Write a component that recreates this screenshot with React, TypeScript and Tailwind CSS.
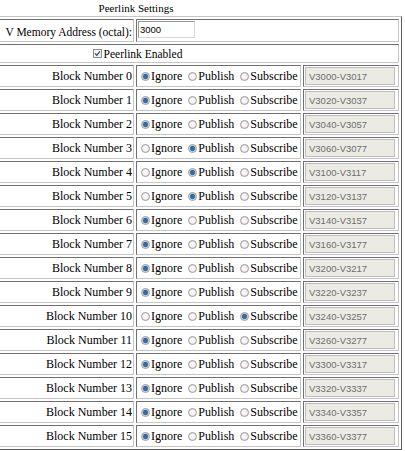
import React from "react";

type Mode = "ignore" | "publish" | "subscribe";

// Blocks 3-5 publish, block 10 subscribes, the rest are ignored
const MODES: Mode[] = Array.from({ length: 16 }, (_, i) =>
  i >= 3 && i <= 5 ? "publish" : i === 10 ? "subscribe" : "ignore"
);

const cell =
  "border border-t-[#707070] border-l-[#707070] border-b-[#c4c4c4] border-r-[#c4c4c4] p-px";

function range(i: number) {
  const start = 0o3000 + i * 16;
  return `V${start.toString(8)}-V${(start + 15).toString(8)}`;
}

function Radio({ on }: { on: boolean }) {
  return (
    <svg width="9" height="9" viewBox="0 0 9 9" className="ml-[3px] mr-px shrink-0">
      <circle cx="4.5" cy="4.5" r="4" fill="#e2e2e2" stroke="#a0a0a0" strokeWidth="1" />
      <circle cx="4.5" cy="4.5" r="2.8" fill="#f4f4f4" />
      {on && <circle cx="4.5" cy="4.5" r="2.4" fill="#2f6eae" stroke="#1f4f80" strokeWidth="0.6" />}
    </svg>
  );
}

function Option({ label, on }: { label: string; on: boolean }) {
  return (
    <span className="flex items-center mr-[3px]">
      <Radio on={on} />
      <span>{label}</span>
    </span>
  );
}

export default function App() {
  return (
    <div className="w-[405px] h-[451px] overflow-hidden bg-white text-black font-['Liberation_Serif',serif] text-[12px]">
      <div className="-ml-[130px] w-[532px]">
        <div className="h-4 text-center text-[11px] leading-4">Peerlink Settings</div>
        <div className="grid grid-cols-[261px_165px_96px] gap-[2px] p-[2px] border border-t-[#c6c6c6] border-l-[#c6c6c6] border-b-[#5c5c5c] border-r-[#5c5c5c]">
          <div className={`${cell} h-[23px] flex items-start justify-end`}>
            <span className="text-[11.5px] leading-[18px] pt-[2px]">V Memory Address (octal):</span>
          </div>
          <div className={`${cell} col-span-2 h-[23px] flex items-start`}>
            <input
              defaultValue="3000"
              className="w-[57px] h-[17px] border border-t-[#9a9a9a] border-l-[#9a9a9a] border-b-[#d6d6d6] border-r-[#d6d6d6] bg-white px-px font-['Liberation_Sans',sans-serif] text-[9.5px] text-black outline-none"
            />
          </div>

          <div className={`${cell} col-span-3 h-[19px] flex items-center justify-center`}>
            <svg width="9" height="9" viewBox="0 0 9 9" className="ml-[3px] mr-[2px]">
              <rect x="0.5" y="0.5" width="8" height="8" fill="#f3f3f3" stroke="#8e8e8e" />
              <path d="M2 4.4 L3.8 6.3 L7 2.4" fill="none" stroke="#3a4e74" strokeWidth="1.3" />
            </svg>
            <span className="text-[11.5px] leading-[14px]">Peerlink Enabled</span>
          </div>

          {MODES.map((mode, i) => (
            <React.Fragment key={i}>
              <div className={`${cell} h-[22px] flex items-center justify-end`}>
                <span className="leading-[18px]">Block Number {i}</span>
              </div>
              <div className={`${cell} h-[22px] flex items-center leading-[18px]`}>
                <Option label="Ignore" on={mode === "ignore"} />
                <Option label="Publish" on={mode === "publish"} />
                <Option label="Subscribe" on={mode === "subscribe"} />
              </div>
              <div className={`${cell} h-[22px] flex items-center`}>
                <input
                  readOnly
                  value={range(i)}
                  className="w-[90px] h-[18px] border border-[#bcbcbc] bg-[#ebebe4] pl-[3px] font-['Liberation_Sans',sans-serif] text-[9.5px] text-[#6d6d6d] outline-none"
                />
              </div>
            </React.Fragment>
          ))}
        </div>
      </div>
    </div>
  );
}
